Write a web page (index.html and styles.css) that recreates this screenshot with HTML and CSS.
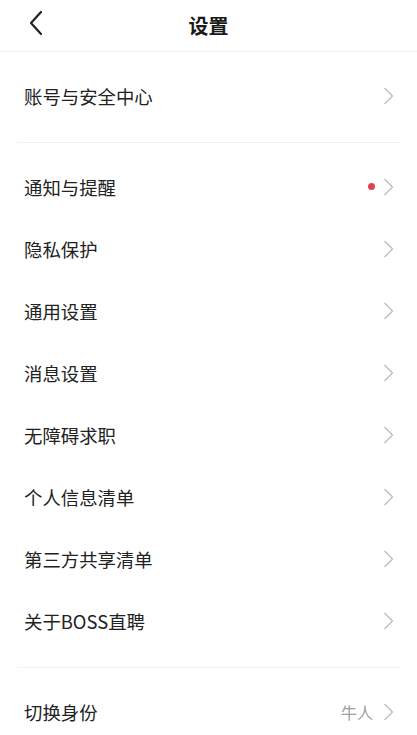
FILE: index.html
```html
<!DOCTYPE html>
<html lang="zh-CN">
<head>
    <meta charset="UTF-8">
    <meta name="viewport" content="width=device-width, initial-scale=1.0">
    <title>设置</title>
    <link rel="stylesheet" href="styles.css">
</head>
<body>
    <div class="header">
        <span class="back">
            <svg width="16" height="26" viewBox="0 0 16 26"><path d="M13 2 L3 13 L13 24" fill="none" stroke="#222" stroke-width="2.2" stroke-linecap="round" stroke-linejoin="round"/></svg>
        </span>
        <h1>设置</h1>
    </div>

    <div class="section">
        <div class="row"><span class="label">账号与安全中心</span><svg class="arrow" width="11" height="18" viewBox="0 0 11 18"><path d="M1.5 1 L9.5 9 L1.5 17" fill="none" stroke="#bcbcbc" stroke-width="1.3"/></svg></div>
    </div>

    <div class="section">
        <div class="row"><span class="label">通知与提醒</span><span class="dot"></span><svg class="arrow" width="11" height="18" viewBox="0 0 11 18"><path d="M1.5 1 L9.5 9 L1.5 17" fill="none" stroke="#bcbcbc" stroke-width="1.3"/></svg></div>
        <div class="row"><span class="label">隐私保护</span><svg class="arrow" width="11" height="18" viewBox="0 0 11 18"><path d="M1.5 1 L9.5 9 L1.5 17" fill="none" stroke="#bcbcbc" stroke-width="1.3"/></svg></div>
        <div class="row"><span class="label">通用设置</span><svg class="arrow" width="11" height="18" viewBox="0 0 11 18"><path d="M1.5 1 L9.5 9 L1.5 17" fill="none" stroke="#bcbcbc" stroke-width="1.3"/></svg></div>
        <div class="row"><span class="label">消息设置</span><svg class="arrow" width="11" height="18" viewBox="0 0 11 18"><path d="M1.5 1 L9.5 9 L1.5 17" fill="none" stroke="#bcbcbc" stroke-width="1.3"/></svg></div>
        <div class="row"><span class="label">无障碍求职</span><svg class="arrow" width="11" height="18" viewBox="0 0 11 18"><path d="M1.5 1 L9.5 9 L1.5 17" fill="none" stroke="#bcbcbc" stroke-width="1.3"/></svg></div>
        <div class="row"><span class="label">个人信息清单</span><svg class="arrow" width="11" height="18" viewBox="0 0 11 18"><path d="M1.5 1 L9.5 9 L1.5 17" fill="none" stroke="#bcbcbc" stroke-width="1.3"/></svg></div>
        <div class="row"><span class="label">第三方共享清单</span><svg class="arrow" width="11" height="18" viewBox="0 0 11 18"><path d="M1.5 1 L9.5 9 L1.5 17" fill="none" stroke="#bcbcbc" stroke-width="1.3"/></svg></div>
        <div class="row"><span class="label">关于BOSS直聘</span><svg class="arrow" width="11" height="18" viewBox="0 0 11 18"><path d="M1.5 1 L9.5 9 L1.5 17" fill="none" stroke="#bcbcbc" stroke-width="1.3"/></svg></div>
    </div>

    <div class="section last">
        <div class="row"><span class="label">切换身份</span><span class="value">牛人</span><svg class="arrow" width="11" height="18" viewBox="0 0 11 18"><path d="M1.5 1 L9.5 9 L1.5 17" fill="none" stroke="#bcbcbc" stroke-width="1.3"/></svg></div>
    </div>
</body>
</html>
```

FILE: styles.css
```css
body { margin: 0; background: #fff; color: #222; font-family: "Noto Sans CJK SC", "Noto Sans", sans-serif; }
.header { height: 51px; border-bottom: 1px solid #f2f2f2; display: flex; align-items: center; justify-content: center; position: relative; }
.header h1 { margin: 0; font-size: 20px; font-weight: 700; color: #1a1a1a; }
.back { position: absolute; left: 28px; top: 10px; }
.section { margin: 0 17px; padding: 14px 0; border-bottom: 1px solid #f2f2f2; }
.section.last { border-bottom: none; }
.row { height: 62px; box-sizing: border-box; padding: 0 5px 3px 7px; display: flex; align-items: center; }
.label { flex: 1; font-size: 18.4px; }
.value { font-size: 16px; color: #a0a0a0; margin-right: 10px; }
.dot { width: 7px; height: 7px; border-radius: 50%; background: #e2434e; margin-right: 8px; }
.arrow { display: block; margin-right: 1px; }
```
